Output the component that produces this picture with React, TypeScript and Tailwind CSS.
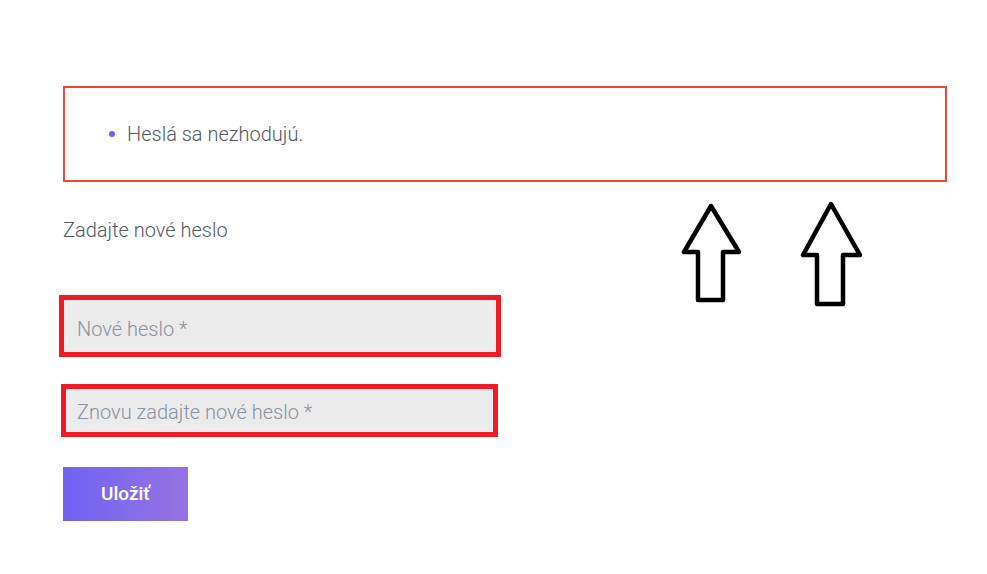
import React from 'react';

const font = { fontFamily: 'Roboto, "Liberation Sans", sans-serif' };

function Arrow({ d }: { d: string }) {
  return (
    <path d={d} fill="none" stroke="#000" strokeWidth={4.5} strokeLinejoin="round" strokeLinecap="round" />
  );
}

export default function App() {
  return (
    <div className="relative min-h-[574px] w-[987px] bg-white" style={font}>
      <div className="pl-[63px] pr-[40px] pt-[86px]">
        <div className="flex h-[96px] items-center border-2 border-[#f0443a] pl-[44px]">
          <ul>
            <li className="flex items-center gap-[12px] text-[20px] font-light leading-[24px] text-[#54595f]">
              <span className="h-[6px] w-[6px] rounded-full bg-[#7a5cf0]" />
              Heslá sa nezhodujú.
            </li>
          </ul>
        </div>

        <p className="mt-[36px] text-[20px] font-light leading-[24px] text-[#54595f]">Zadajte nové heslo</p>

        <div className="mt-[53px] ml-[-4px] flex h-[62px] w-[442px] items-center border-[5px] border-[#ed1c24] bg-[#ebebeb] pl-[13px] pt-[5px]">
          <span className="text-[20px] font-light leading-[24px] text-[#8a90a0]">Nové heslo *</span>
        </div>

        <div className="mt-[27px] ml-[-2px] flex h-[53px] w-[437px] items-center border-[5px] border-[#ed1c24] bg-[#ebebeb] pl-[11px] pt-[3px]">
          <span className="text-[20px] font-light leading-[24px] text-[#8a90a0]">Znovu zadajte nové heslo *</span>
        </div>

        <button className="mt-[30px] flex h-[54px] w-[125px] items-center justify-center bg-gradient-to-r from-[#7162f3] to-[#9573e2] text-[19px] font-medium text-white">
          Uložiť
        </button>
      </div>

      <svg className="absolute left-0 top-0" width="987" height="574">
        <Arrow d="M711 206 L684 252 L698 252 L698 300 L723 300 L723 252 L739 252 Z" />
        <Arrow d="M831 204 L803 255 L817 255 L817 304 L843 304 L843 255 L860 255 Z" />
      </svg>
    </div>
  );
}
